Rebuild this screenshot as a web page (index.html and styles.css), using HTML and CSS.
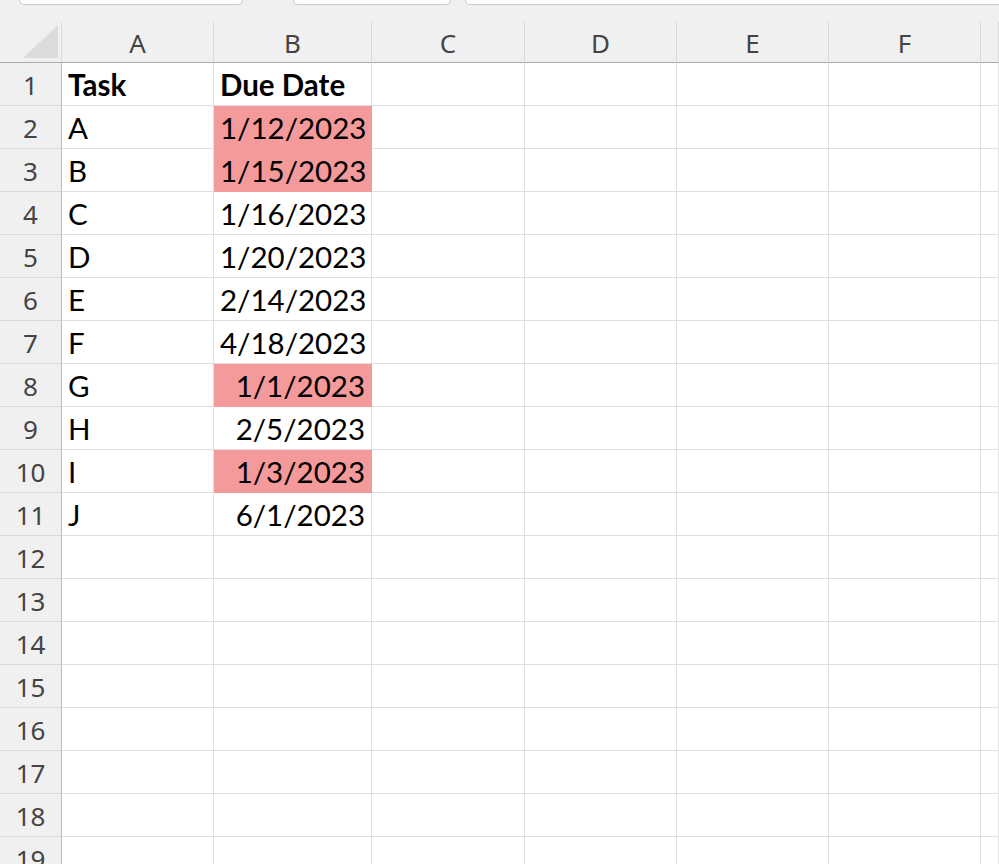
FILE: index.html
```html
<html>
  <head>
    <link rel="stylesheet" href="styles.css">
  </head>
  <body>
    <div class="tabstrip">
      <div class="tab tab1"></div>
      <div class="tab tab2"></div>
      <div class="tab tab3"></div>
    </div>

    <div class="sheet" id="sheet"></div>

    <script>
      const colNames = ["A", "B", "C", "D", "E", "F", ""];
      const data = [
        ["Task", "Due Date"],
        ["A", "1/12/2023"],
        ["B", "1/15/2023"],
        ["C", "1/16/2023"],
        ["D", "1/20/2023"],
        ["E", "2/14/2023"],
        ["F", "4/18/2023"],
        ["G", "1/1/2023"],
        ["H", "2/5/2023"],
        ["I", "1/3/2023"],
        ["J", "6/1/2023"]
      ];
      // rows where the due date is past
      const overdue = [2, 3, 8, 10];
      const sheet = document.getElementById("sheet");

      function addCell(cls, text) {
        const div = document.createElement("div");
        div.className = cls;
        div.textContent = text || "";
        sheet.appendChild(div);
      }

      addCell("corner");
      colNames.forEach((name) => addCell("colhead", name));

      for (let r = 1; r <= 19; r++) {
        addCell("rowhead", r);
        const row = data[r - 1] || [];
        for (let c = 0; c < colNames.length; c++) {
          let cls = "cell";
          if (r == 1) cls += " bold";
          if (c == 1 && r > 1) cls += " date";
          if (c == 1 && overdue.includes(r)) cls += " overdue";
          addCell(cls, row[c]);
        }
      }
    </script>
  </body>
</html>
```

FILE: styles.css
```css
body {
  margin: 0;
  background-color: #f0f0f0;
  overflow: hidden;
}

.tabstrip {
  height: 22px;
  display: flex;
  overflow: hidden;
}

.tab {
  height: 5px;
  background-color: #ffffff;
  border: 1px solid #c9c9c9;
  border-top: none;
  border-radius: 0 0 7px 7px;
  box-sizing: border-box;
}

.tab1 {
  margin-left: 19px;
  width: 224px;
}

.tab2 {
  margin-left: 50px;
  width: 158px;
}

.tab3 {
  margin-left: 14px;
  flex: 1;
  margin-right: -20px;
}

.sheet {
  display: grid;
  grid-template-columns: 62px 152px 158px 153px 152px 152px 152px 1fr;
  grid-template-rows: 41px;
  grid-auto-rows: 43px;
  background-color: #ffffff;
}

.sheet div {
  box-sizing: border-box;
}

.corner {
  background-color: #f0f0f0;
  border-right: 1px solid #dadada;
  border-bottom: 1px solid #ababab;
  position: relative;
}

.corner::after {
  content: "";
  position: absolute;
  left: 23px;
  top: 3px;
  width: 0;
  height: 0;
  border-left: 35px solid transparent;
  border-bottom: 33px solid #dcdcdc;
}

.colhead {
  background-color: #f0f0f0;
  border-right: 1px solid #d9d9d9;
  border-bottom: 1px solid #ababab;
  font-family: "Noto Sans", sans-serif;
  font-size: 26px;
  color: #444444;
  text-align: center;
  line-height: 43px;
}

.rowhead {
  background-color: #f0f0f0;
  border-right: 1px solid #bcbcbc;
  border-bottom: 1px solid #dadada;
  font-family: "Noto Sans", sans-serif;
  font-size: 26px;
  color: #444444;
  text-align: center;
  line-height: 44px;
}

.cell {
  border-right: 1px solid #e0e0e0;
  border-bottom: 1px solid #e0e0e0;
  font-family: Lato, sans-serif;
  font-size: 29.5px;
  color: #000000;
  line-height: 43px;
  padding: 0 6px 0 6px;
  white-space: nowrap;
}

.bold {
  font-weight: bold;
}

.date {
  text-align: right;
}

.overdue {
  background-color: #f59a9a;
  border-right-color: #f59a9a;
  border-bottom-color: #f59a9a;
}
```
